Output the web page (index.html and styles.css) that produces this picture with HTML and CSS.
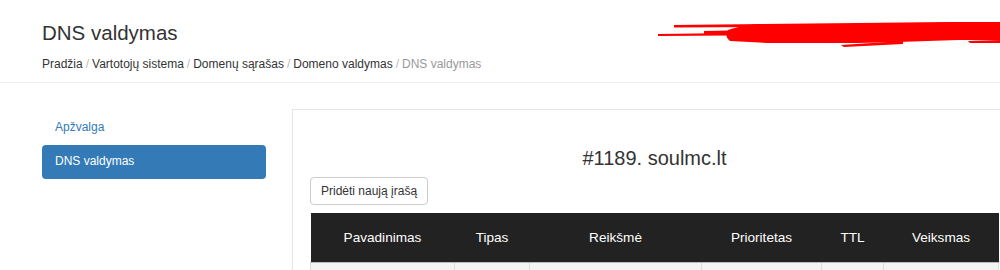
FILE: index.html
```html
<!DOCTYPE html>
<html>
<head>
  <meta charset="UTF-8">
  <title>DNS valdymas</title>
  <link rel="stylesheet" href="styles.css">
</head>
<body>
  <div class="page-header">
    <h1>DNS valdymas</h1>
    <div class="breadcrumb">
      <a href="#">Pradžia</a><span class="sep">/</span><a href="#">Vartotojų sistema</a><span class="sep">/</span><a href="#">Domenų sąrašas</a><span class="sep">/</span><a href="#">Domeno valdymas</a><span class="sep">/</span><span class="current">DNS valdymas</span>
    </div>
    <svg class="redact" width="345" height="30" viewBox="0 0 345 30">
      <path d="M0 14 L75 13 L75 15.5 L0 16 Z" fill="#ff0000"/>
      <path d="M16 5 L110 4 L110 7 L16 7.5 Z" fill="#ff0000"/>
      <path d="M46 11 L95 10 L95 14 L46 14 Z" fill="#ff0000"/>
      <path d="M70 10 Q80 6 100 4 L200 3 L290 2 L345 2 L345 20 L300 20 L240 22 L200 23 L150 23 L110 23 L72 21 Q66 16 70 10 Z" fill="#ff0000"/>
      <path d="M183 25 L245 21 L245 24 L186 27 Z" fill="#ff0000"/>
      <path d="M310 21 L345 20 L345 23 L312 23 Z" fill="#ff0000"/>
    </svg>
  </div>

  <div class="layout">
    <div class="sidebar">
      <a class="nav-item" href="#">Apžvalga</a>
      <a class="nav-item active" href="#">DNS valdymas</a>
    </div>

    <div class="panel">
      <h2>#1189. soulmc.lt</h2>
      <button class="btn">Pridėti naują įrašą</button>
      <table class="records">
        <thead>
          <tr>
            <th class="c-name">Pavadinimas</th>
            <th class="c-type">Tipas</th>
            <th class="c-value">Reikšmė</th>
            <th class="c-prio">Prioritetas</th>
            <th class="c-ttl">TTL</th>
            <th class="c-act">Veiksmas</th>
          </tr>
        </thead>
        <tbody>
          <tr>
            <td></td><td></td><td></td><td></td><td></td><td></td>
          </tr>
        </tbody>
      </table>
    </div>
  </div>
</body>
</html>
```

FILE: styles.css
```css
html, body {
  margin: 0;
  padding: 0;
  overflow: hidden;
}
body {
  width: 1000px;
  font-family: "Liberation Sans", Arial, sans-serif;
  color: #333;
  background: #fff;
}
a {
  text-decoration: none;
}
.page-header {
  position: relative;
  padding: 18px 42px 10px;
  border-bottom: 1px solid #eee;
}
.page-header h1 {
  margin: 0;
  font-size: 20.5px;
  font-weight: normal;
  line-height: 30px;
}
.breadcrumb {
  margin-top: 8px;
  font-size: 12px;
  line-height: 16px;
}
.breadcrumb a {
  color: #333;
}
.breadcrumb .sep {
  color: #bbb;
  padding: 0 3px;
}
.breadcrumb .current {
  color: #999;
}
.redact {
  position: absolute;
  left: 658px;
  top: 20px;
}
.layout {
  display: flex;
  gap: 26px;
  padding: 26px 0 0 42px;
}
.sidebar {
  width: 224px;
  flex: none;
  padding-top: 2px;
}
.nav-item {
  display: block;
  padding: 0 13px;
  height: 34px;
  line-height: 33px;
  font-size: 12px;
  color: #337ab7;
  border-radius: 4px;
}
.nav-item.active {
  background-color: #337ab7;
  color: #fff;
}
.panel {
  flex: none;
  width: 706px;
  padding: 0 0 0 17px;
  border: 1px solid #e5e5e5;
  min-height: 200px;
}
.panel h2 {
  margin: 36px 0 7px;
  font-size: 20px;
  font-weight: normal;
  line-height: 24px;
  text-align: center;
  padding-right: 17px;
}
.btn {
  display: block;
  font-family: inherit;
  font-size: 12px;
  line-height: 16px;
  color: #333;
  background: #fff;
  border: 1px solid #ccc;
  border-radius: 4px;
  padding: 5px 10px;
  margin-bottom: 8px;
}
.records {
  width: 688px;
  border-collapse: collapse;
  table-layout: fixed;
}
.records th {
  background-color: #222;
  color: #fff;
  font-weight: normal;
  font-size: 13.6px;
  height: 49px;
  padding: 0;
  text-align: center;
  border-bottom: 1px solid #bbb;
}
.records td {
  background-color: #f4f4f4;
  border: 1px solid #ddd;
  height: 40px;
}
.c-name { width: 144px; }
.c-type { width: 75px; }
.c-value { width: 172px; }
.c-prio { width: 120px; }
.c-ttl { width: 62px; }
.c-act { width: 115px; }
```
